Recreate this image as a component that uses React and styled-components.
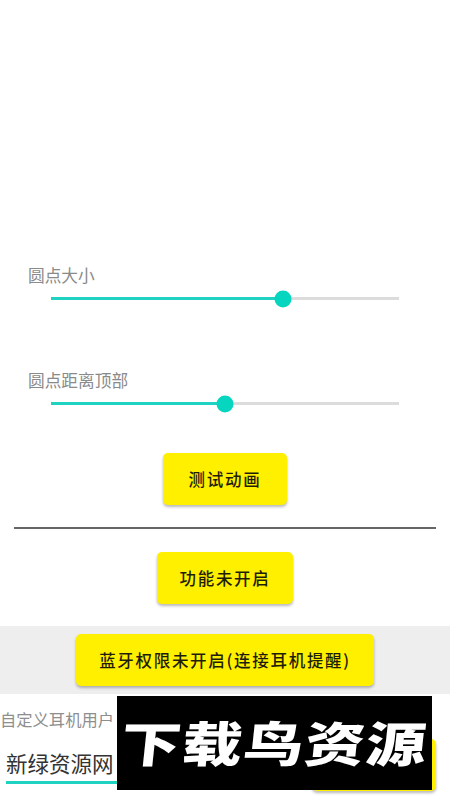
import React from 'react';
import styled, { createGlobalStyle } from 'styled-components';

const GlobalStyle = createGlobalStyle`
  html, body {
    margin: 0;
    padding: 0;
    background: #ffffff;
  }
  body {
    font-family: 'Noto Sans CJK SC', 'Noto Sans', sans-serif;
  }
`;

const Page = styled.div`
  position: relative;
  width: 450px;
  height: 800px;
  overflow: hidden;
  padding-top: 264px;
  box-sizing: border-box;
  display: flex;
  flex-direction: column;
`;

const SliderBlock = styled.div`
  display: flex;
  flex-direction: column;
  height: ${(p) => p.$height}px;
  padding-left: 28px;
`;

const SliderLabel = styled.div`
  font-size: 16.7px;
  line-height: 22px;
  color: #8a8a8a;
`;

const Track = styled.div`
  position: relative;
  width: 348px;
  height: 3px;
  margin: 11px 0 0 23px;
  background: #dcdcdc;
`;

const TrackFill = styled.div`
  height: 100%;
  background: #1fd2c2;
`;

const Thumb = styled.div`
  position: absolute;
  top: 50%;
  width: 17px;
  height: 17px;
  border-radius: 50%;
  background: #06d6bf;
  transform: translate(-50%, -50%);
`;

const YellowButton = styled.button`
  display: block;
  flex-shrink: 0;
  width: ${(p) => p.$width}px;
  height: 52px;
  margin: 0;
  padding: 0;
  border: none;
  border-radius: 5px;
  background: #fff000;
  box-shadow: 0 2px 3px rgba(0, 0, 0, 0.28);
  color: #1f1e08;
  font-family: inherit;
  font-size: 16.5px;
  font-weight: 500;
  letter-spacing: 1.7px;
  white-space: nowrap;
`;

const ButtonRow = styled.div`
  display: flex;
  justify-content: center;
`;

const Divider = styled.hr`
  height: 2px;
  margin: 22px 14px 23px;
  border: none;
  background: #666666;
`;

const GrayBand = styled.div`
  display: flex;
  justify-content: center;
  align-items: center;
  height: 68px;
  margin-top: 22px;
  background: #eeeeee;
`;

const CustomRow = styled.div`
  display: flex;
  justify-content: space-between;
  align-items: flex-end;
  height: 106px;
  box-sizing: border-box;
  padding: 0 14px 9px 0;
`;

const Field = styled.div`
  display: flex;
  flex-direction: column;
  align-self: flex-start;
  width: 140px;
  padding-top: 14px;
`;

const FieldLabel = styled.div`
  font-size: 16.3px;
  line-height: 22px;
  color: #8e8e8e;
  white-space: nowrap;
`;

const FieldValue = styled.div`
  margin: 17px 0 0 6px;
  padding-bottom: 3px;
  border-bottom: 3px solid #1fd2c2;
  font-size: 21.5px;
  line-height: 31px;
  color: #333333;
  white-space: nowrap;
`;

const Watermark = styled.div`
  position: absolute;
  left: 117px;
  top: 696px;
  display: flex;
  justify-content: center;
  align-items: center;
  width: 315px;
  height: 94px;
  box-sizing: border-box;
  padding-bottom: 5px;
  background: #000000;
`;

const WatermarkText = styled.span`
  color: #ffffff;
  font-size: 48px;
  font-weight: 900;
  line-height: 1;
  letter-spacing: 1px;
  white-space: nowrap;
  transform: skewX(-6deg) scaleX(1.25);
`;

const Slider = ({ label, value, height }) => (
  <SliderBlock $height={height}>
    <SliderLabel>{label}</SliderLabel>
    <Track>
      <TrackFill style={{ width: `${value}%` }} />
      <Thumb style={{ left: `${value}%` }} />
    </Track>
  </SliderBlock>
);

const App = () => {
  return (
    <Page>
      <GlobalStyle />
      <Slider label="圆点大小" value={66.7} height={105} />
      <Slider label="圆点距离顶部" value={50} height={84} />
      <ButtonRow>
        <YellowButton $width={124}>测试动画</YellowButton>
      </ButtonRow>
      <Divider />
      <ButtonRow>
        <YellowButton $width={136}>功能未开启</YellowButton>
      </ButtonRow>
      <GrayBand>
        <YellowButton $width={298}>蓝牙权限未开启(连接耳机提醒)</YellowButton>
      </GrayBand>
      <CustomRow>
        <Field>
          <FieldLabel>自定义耳机用户</FieldLabel>
          <FieldValue>新绿资源网</FieldValue>
        </Field>
        <YellowButton $width={124} />
      </CustomRow>
      <Watermark>
        <WatermarkText>下载鸟资源</WatermarkText>
      </Watermark>
    </Page>
  );
};

export default App;
